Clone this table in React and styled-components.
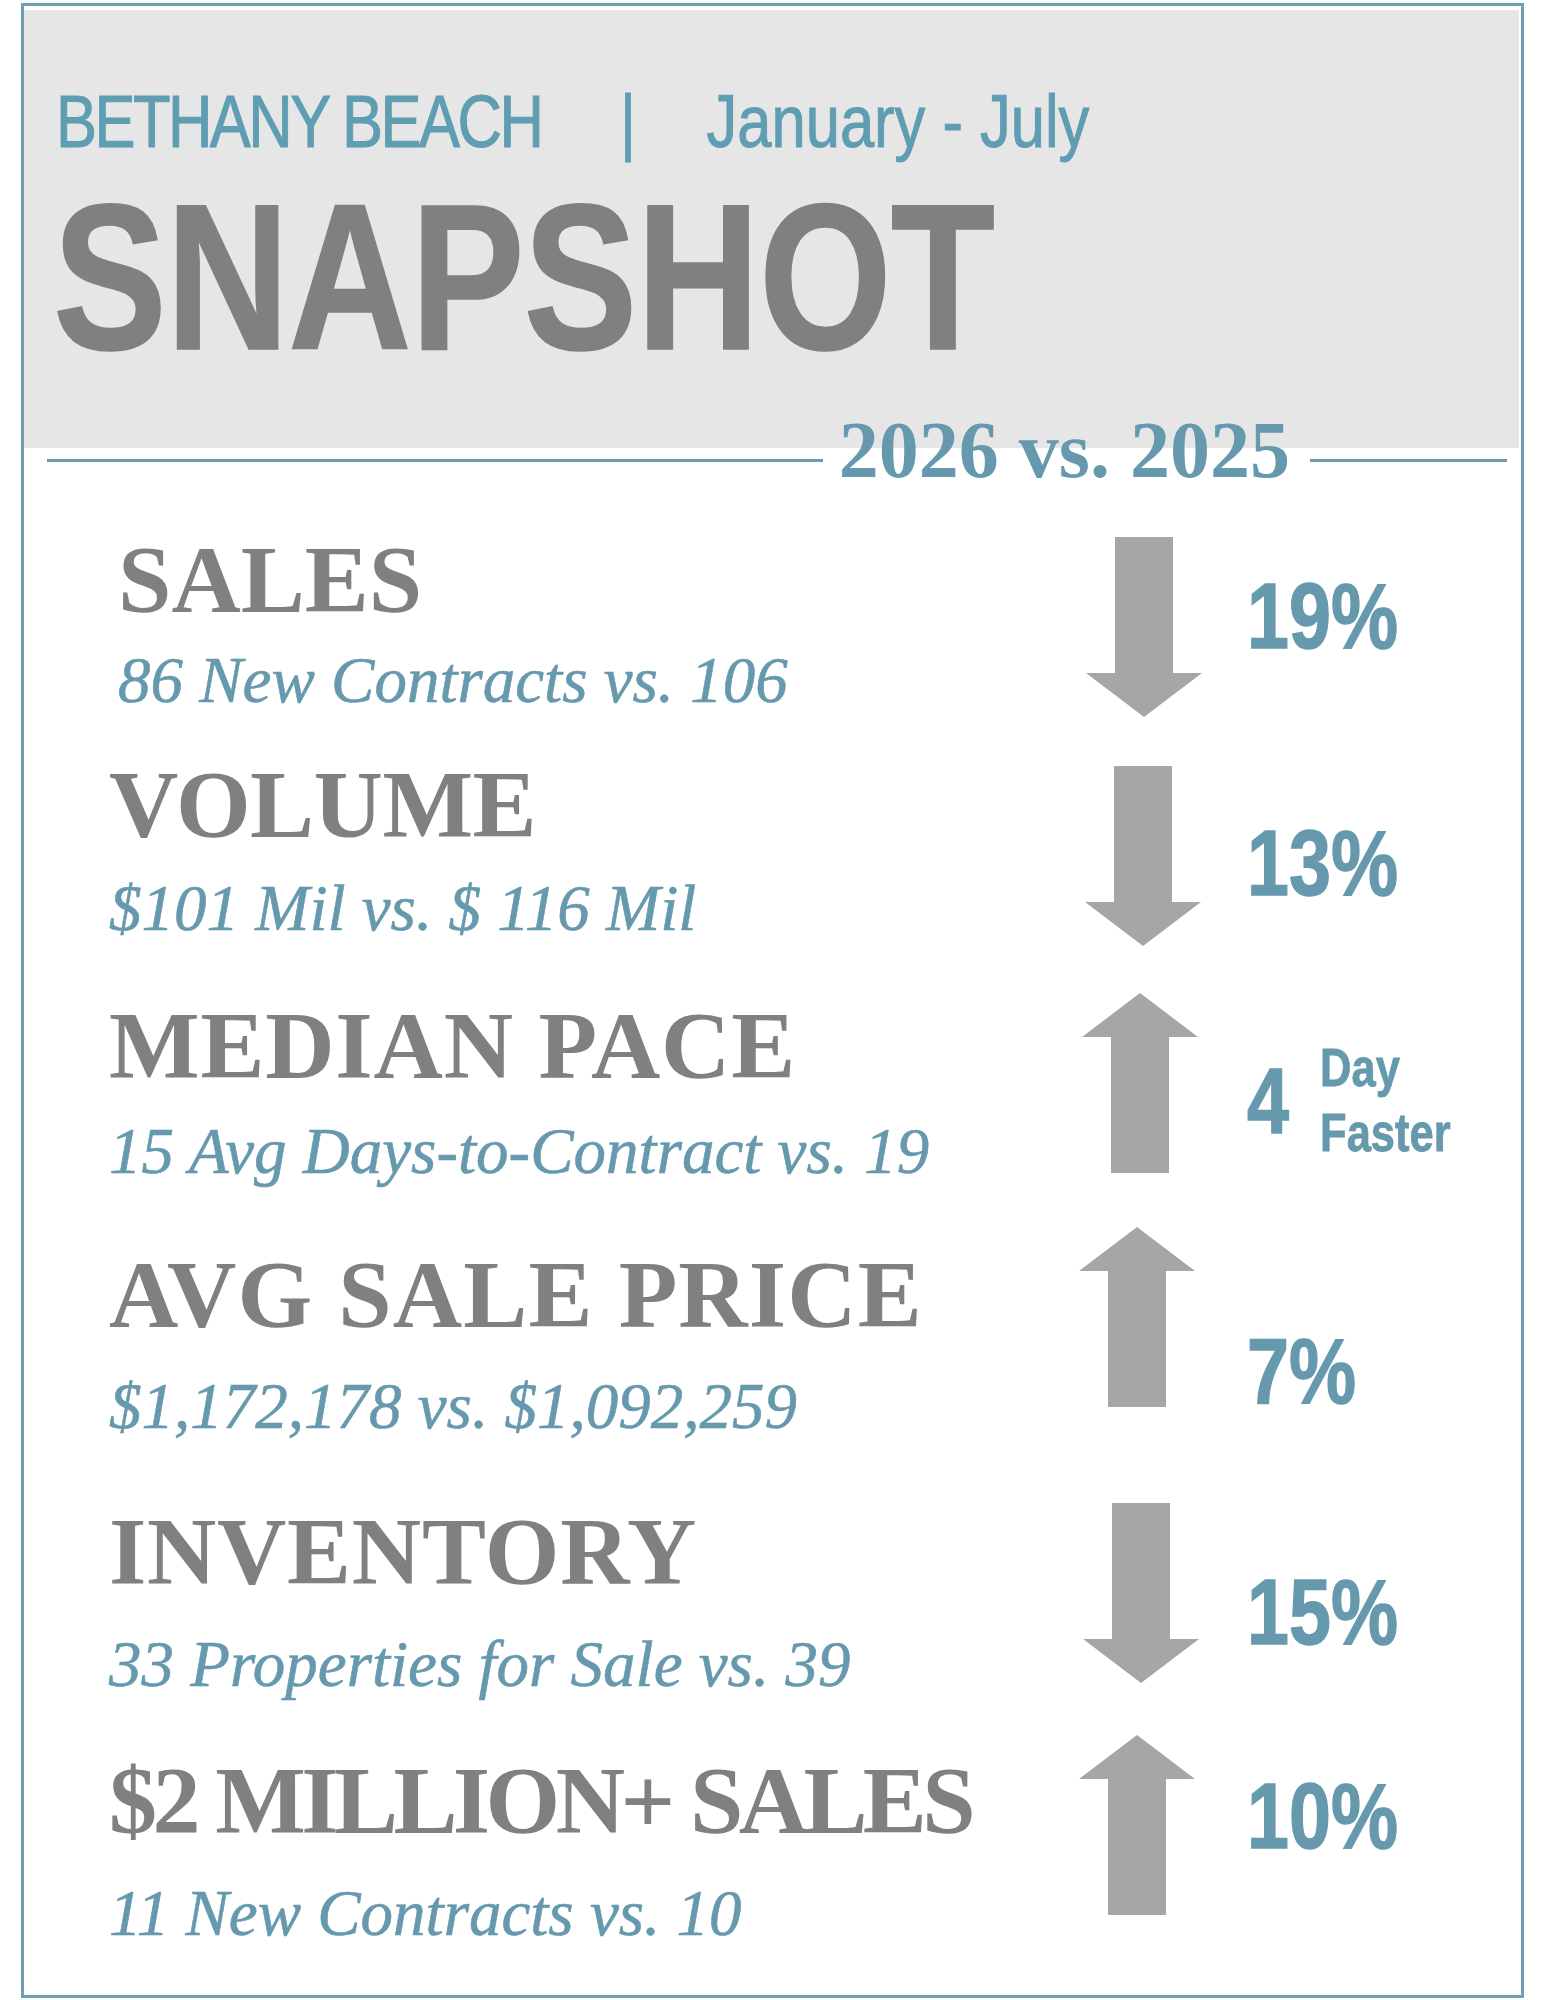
import styled, { createGlobalStyle } from "styled-components";

const GlobalStyle = createGlobalStyle`
  body {
    margin: 0;
    background: #ffffff;
  }
`;

const TEAL = "#6699ad";
const GRAY_TEXT = "#808080";
// no narrow face installed: Liberation Sans squeezed to Arial Narrow's 82%
const SANS = `"Liberation Sans", Arial, sans-serif`;
const SQUEEZE = 0.82;
const SERIF = `"Liberation Serif", "Times New Roman", serif`;

const Card = styled.div`
  box-sizing: border-box;
  width: 1503px;
  height: 1995px;
  margin: 3px 0 0 21px;
  padding: 4px 2px 0 0;
  border: 3px solid #6f9fb3;
`;

const Header = styled.div`
  box-sizing: border-box;
  height: 438px;
  padding: 74px 0 0 32px;
  background: #e6e6e6;
`;

const Narrow = styled.div`
  transform: scaleX(${SQUEEZE});
  transform-origin: left top;
`;

const Kicker = styled(Narrow)`
  display: flex;
  align-items: flex-start;
  font-family: ${SANS};
  font-size: 75px;
  line-height: 1;
  white-space: nowrap;
  color: #5f9db2;
  -webkit-text-stroke: 1px #5f9db2;
`;

const Place = styled.span`
  letter-spacing: -3.1px;
`;

const Pipe = styled.span`
  margin: 0 86px 0 96px;
`;

const Title = styled(Narrow)`
  margin: 14px 0 0 -3px;
  font-family: ${SANS};
  font-weight: 700;
  font-size: 208px;
  line-height: 1;
  letter-spacing: -1px;
  white-space: nowrap;
  color: ${GRAY_TEXT};
  -webkit-text-stroke: 1.5px ${GRAY_TEXT};
`;

const Divider = styled.div`
  display: flex;
  align-items: flex-start;
  margin-top: -38px;
  padding: 0 12px 0 23px;
`;

const Rule = styled.div`
  flex: ${(p) => (p.$grow ? 1 : "none")};
  width: ${(p) => (p.$grow ? "auto" : "197px")};
  height: 3px;
  margin-top: 49px;
  background: #6a9caf;
`;

const Years = styled.div`
  margin: 0 20px 0 16px;
  font-family: ${SERIF};
  font-weight: 700;
  font-size: 80px;
  line-height: 1;
  color: ${TEAL};
`;

const Rows = styled.div`
  padding-top: 42px;
`;

const Row = styled.div`
  display: grid;
  grid-template-columns: 972px 116px 1fr;
  align-items: start;
  height: ${(p) => p.$height}px;
  padding-left: 85px;
`;

const TextCol = styled.div`
  padding-left: ${(p) => p.$indent}px;
`;

const Label = styled.div`
  font-family: ${SERIF};
  font-weight: 700;
  font-size: 96px;
  line-height: 1;
  letter-spacing: ${(p) => p.$track}px;
  color: ${GRAY_TEXT};
  white-space: nowrap;
`;

const Sub = styled.div`
  margin-top: ${(p) => p.$gap}px;
  font-family: ${SERIF};
  font-style: italic;
  font-size: 65px;
  line-height: 1;
  color: ${TEAL};
  -webkit-text-stroke: 0.6px ${TEAL};
  white-space: nowrap;
`;

const ArrowBox = styled.svg`
  display: block;
  margin: ${(p) => p.$top}px 0 0 ${(p) => p.$shift}px;
`;

const ValueCol = styled(Narrow)`
  display: flex;
  align-items: flex-start;
  margin-left: 50px;
  font-family: ${SANS};
  font-weight: 700;
  color: ${TEAL};
  -webkit-text-stroke: 1.4px ${TEAL};
  white-space: nowrap;
`;

const Value = styled.div`
  margin-top: ${(p) => p.$top}px;
  font-size: 92px;
  line-height: 1;
`;

const Unit = styled.div`
  margin: ${(p) => p.$top}px 0 0 38px;
  font-size: 53px;
  line-height: 65px;
  -webkit-text-stroke: 0.8px ${TEAL};
`;

const rows = [
  { label: "SALES", sub: "86 New Contracts vs. 106", dir: "down", value: "19%", indent: 9, track: 0, subGap: 20, arrowTop: 5, shift: 5, valueTop: 38, height: 225 },
  { label: "VOLUME", sub: "$101 Mil vs. $ 116 Mil", dir: "down", value: "13%", indent: -8, track: -0.5, subGap: 23, arrowTop: 9, shift: 4, valueTop: 60, height: 241 },
  { label: "MEDIAN PACE", sub: "15 Avg Days-to-Contract vs. 19", dir: "up", value: "4", unit: ["Day", "Faster"], indent: 0, track: 0.8, subGap: 25, arrowTop: -5, shift: 1, valueTop: 57, unitTop: 37, height: 249 },
  { label: "AVG SALE PRICE", sub: "$1,172,178 vs. $1,092,259", dir: "up", value: "7%", indent: 0, track: 1.1, subGap: 31, arrowTop: -20, shift: -2, valueTop: 78, height: 257 },
  { label: "INVENTORY", sub: "33 Properties for Sale vs. 39", dir: "down", value: "15%", indent: 0, track: 0.7, subGap: 32, arrowTop: -1, shift: 2, valueTop: 62, height: 249 },
  { label: "$2 MILLION+ SALES", sub: "11 New Contracts vs. 10", dir: "up", value: "10%", indent: 0, track: -4.6, subGap: 32, arrowTop: -18, shift: -2, valueTop: 17, height: 240 },
];

function Arrow({ dir, top, shift }) {
  const d =
    dir === "down"
      ? "M29 0 H87 V136 H116 L58 180 L0 136 H29 Z"
      : "M58 0 L116 44 H87 V180 H29 V44 H0 Z";
  return (
    <ArrowBox $top={top} $shift={shift} width="116" height="180" viewBox="0 0 116 180">
      <path d={d} fill="#a6a6a6" />
    </ArrowBox>
  );
}

function MetricRow({ row }) {
  return (
    <Row $height={row.height}>
      <TextCol $indent={row.indent}>
        <Label $track={row.track}>{row.label}</Label>
        <Sub $gap={row.subGap}>{row.sub}</Sub>
      </TextCol>
      <Arrow dir={row.dir} top={row.arrowTop} shift={row.shift} />
      <ValueCol>
        <Value $top={row.valueTop}>{row.value}</Value>
        {row.unit && (
          <Unit $top={row.unitTop}>
            {row.unit.map((u) => (
              <div key={u}>{u}</div>
            ))}
          </Unit>
        )}
      </ValueCol>
    </Row>
  );
}

export default function App() {
  return (
    <>
      <GlobalStyle />
      <Card>
        <Header>
          <Kicker>
            <Place>BETHANY BEACH</Place>
            <Pipe>|</Pipe>
            <span>January - July</span>
          </Kicker>
          <Title>SNAPSHOT</Title>
        </Header>
        <Divider>
          <Rule $grow />
          <Years>2026 vs. 2025</Years>
          <Rule />
        </Divider>
        <Rows>
          {rows.map((row) => (
            <MetricRow key={row.label} row={row} />
          ))}
        </Rows>
      </Card>
    </>
  );
}
